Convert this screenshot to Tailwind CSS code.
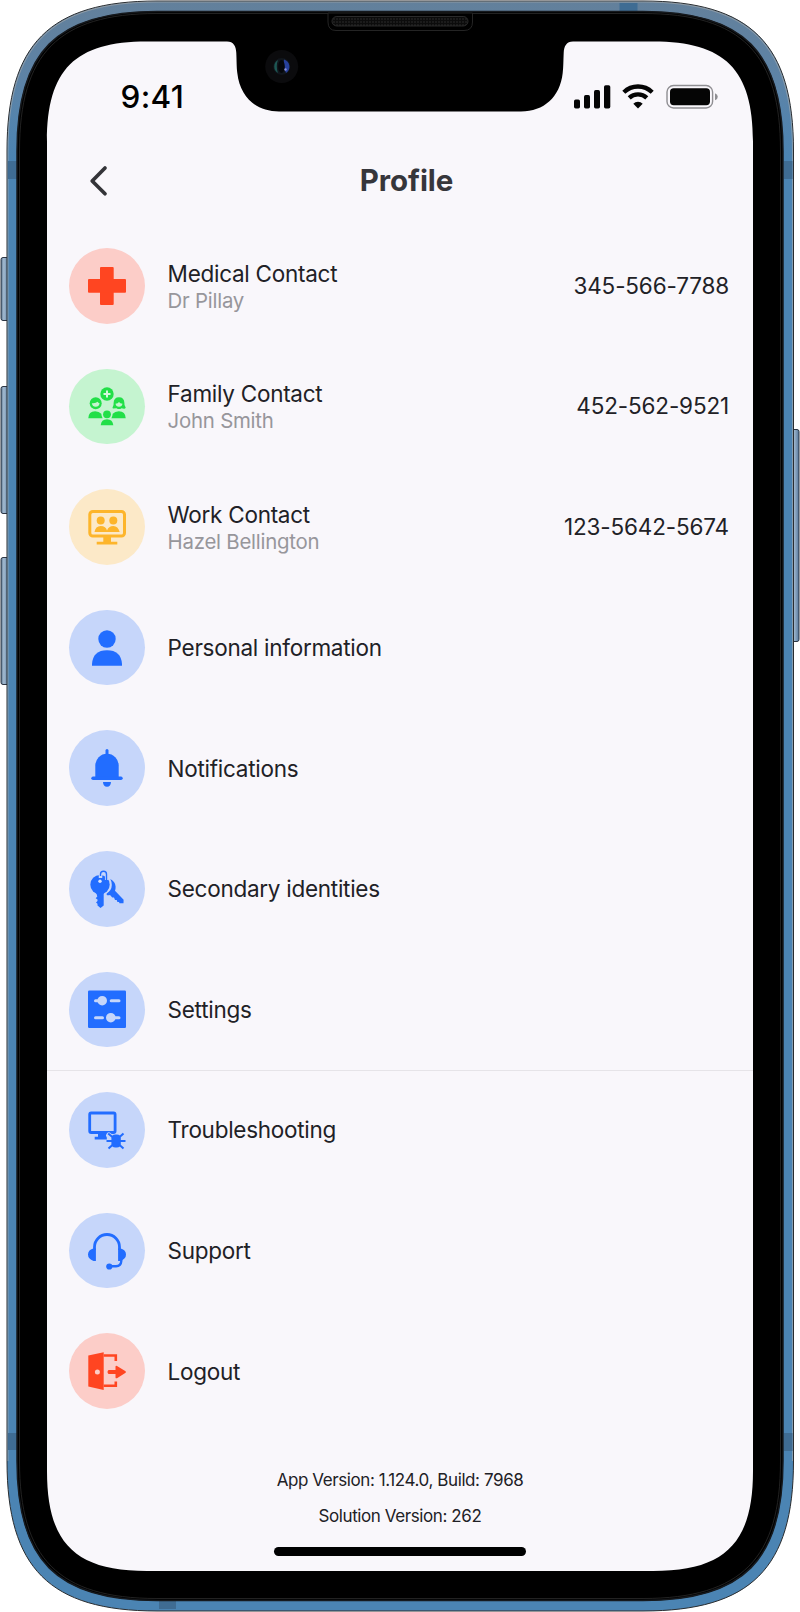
<!DOCTYPE html>
<html lang="en">
<head>
<meta charset="utf-8">
<title>Profile</title>
<script src="https://cdn.jsdelivr.net/npm/@tailwindcss/browser@4"></script>
</head>
<body class="bg-white">
<div class="relative w-[800px] h-[1612px] overflow-hidden font-['Inter','Liberation_Sans',sans-serif] text-[#212126]">
  <!-- device frame -->
  <svg class="absolute inset-0" width="800" height="1612" viewBox="0 0 800 1612" fill="none">
    <defs>
      <linearGradient id="body" x1="0" y1="0" x2="0" y2="1612" gradientUnits="userSpaceOnUse">
        <stop offset="0" stop-color="#63809b"/><stop offset=".05" stop-color="#5d83a6"/><stop offset=".1" stop-color="#4b84b3"/><stop offset="1" stop-color="#4b84b3"/>
      </linearGradient>
      <linearGradient id="btn" x1="0" y1="0" x2="1" y2="0">
        <stop offset="0" stop-color="#5c7690"/><stop offset=".35" stop-color="#a3bbd1"/><stop offset="1" stop-color="#55779b"/>
      </linearGradient>
      <pattern id="mesh" width="3" height="3" patternUnits="userSpaceOnUse"><rect width="3" height="3" fill="#0c0c0c"/><circle cx="1" cy="1" r=".8" fill="#2e2e2e"/></pattern>
    </defs>
    <g fill="url(#btn)" stroke="#2b3543" stroke-width="1">
      <rect x="1" y="257.500" width="8" height="63" rx="2"/>
      <rect x="1" y="386.500" width="8" height="127" rx="2"/>
      <rect x="1" y="557.500" width="8" height="127" rx="2"/>
      <rect x="791" y="429.500" width="8" height="212" rx="2"/>
    </g>
    <path d="M7 151C7 44 49.500 1 157 1H643C751 1 793.500 44 793.500 151V1461C793.500 1568 751 1611 643 1611H157C49.500 1611 7 1568 7 1461Z" fill="url(#body)" stroke="#2a2d30" stroke-width="1"/>
    <path d="M8 1461V151C8 45 50.500 2 157 2H643C750 2 792.500 45 792.500 151V1461" stroke="#b9b5ae" stroke-opacity=".75" stroke-width=".7"/>
    <g fill="#3f6c93">
      <rect x="8" y="161" width="9" height="18"/><rect x="784" y="161" width="8.500" height="18"/>
      <rect x="8" y="1433" width="9" height="17"/><rect x="784" y="1433" width="8.500" height="18"/>
      <rect x="619.500" y="3" width="18" height="8"/><rect x="159" y="1601" width="17" height="8"/>
    </g>
    <path d="M17 151C17 52 56 11.500 157 11.500H643C744 11.500 783 52 783 151V1461C783 1560 744 1600.500 643 1600.500H157C56 1600.500 17 1560 17 1461Z" fill="#000" stroke="#16191d" stroke-width="1.500"/>
    <path d="M19.500 151C19.500 54 58 13.500 157 13.500H643C742 13.500 780.500 54 780.500 151V1461C780.500 1558 742 1598.500 643 1598.500H157C58 1598.500 19.500 1558 19.500 1461Z" stroke="#222"/>
    <path d="M328 13V22Q328 30.500 336 30.500H464Q472.500 30.500 472.500 22V13Z" fill="#000" stroke="#242424" stroke-width="1"/>
    <rect x="332" y="16.500" width="136" height="9.500" rx="4.700" fill="url(#mesh)" stroke="#333" stroke-width=".8"/>
    <!-- screen with notch -->
    <path d="M47 141.500C47 69.500 75 41.500 147 41.500H227C233.500 41.500 236 46 236.300 53C236.700 62 236.500 66 237.300 73C240 97 256 111.500 279 111.500H521C544 111.500 560 97 562.700 73C563.500 66 563.300 62 563.700 53C564 46 566.500 41.500 573 41.500H653C725 41.500 753 69.500 753 141.500V1471C753 1543 725 1571 653 1571H147C75 1571 47 1543 47 1471Z" fill="#f9f7fb"/>
    <circle cx="281.700" cy="66.500" r="16.500" fill="#0b0b0d"/>
    <circle cx="281.700" cy="66.500" r="8.500" fill="#11161c"/>
    <path d="M278 60A7.500 7.500 0 0 0 278 73Q275.500 66 278 60Z" fill="#1d5753"/>
    <path d="M284 59.500A7.500 7.500 0 0 1 286 73Q283 66 284 59.500Z" fill="#27409b"/>
    <ellipse cx="281.500" cy="66.500" rx="3.300" ry="6.500" fill="#05070b"/>
    <circle cx="285.500" cy="69.500" r="1.200" fill="#8a8fd8"/>
  </svg>

  <main class="relative ml-[47px] w-[706px] h-full flex flex-col">
    <!-- status bar -->
    <div class="mt-[72px] h-[50px] flex items-center justify-between pl-[73.500px] pr-[34px]">
      <span class="pb-px text-[31.500px] font-medium leading-none tracking-[0.3px] text-black">9:41</span>
      <svg width="146" height="26" viewBox="0 0 146 26" fill="none">
        <g fill="#050505"><rect x="1" y="15.500" width="6" height="9" rx="1.700"/><rect x="11" y="11" width="6" height="13.500" rx="1.700"/><rect x="21" y="6" width="6" height="18.500" rx="1.700"/><rect x="31" y="1.200" width="6.300" height="23.300" rx="1.700"/></g>
        <g stroke="#050505" stroke-width="4.300"><path d="M50.800 8.200A20.500 20.500 0 0 1 79.200 8.200"/><path d="M56.200 13.900A12.700 12.700 0 0 1 73.800 13.900"/></g>
        <path d="M65 24.600L60.300 19.800A6.700 6.700 0 0 1 69.700 19.800Z" fill="#050505"/>
        <rect x="94" y="1.500" width="45.600" height="22.500" rx="6.500" stroke="#8f8e92" stroke-width="1.400"/>
        <rect x="97" y="4.300" width="40" height="17" rx="3.700" fill="#050505"/>
        <path d="M142 9.300Q144.800 10.300 144.800 12.800T142 16.300Z" fill="#8f8e92"/>
      </svg>
    </div>
    <!-- header -->
    <header class="relative mt-[32px] h-[52px] flex items-center justify-center pl-[13px]">
      <svg class="absolute left-[42px] top-[10.500px]" width="20" height="32" viewBox="0 0 20 32" fill="none" stroke="#343438" stroke-width="3.700" stroke-linecap="round" stroke-linejoin="round"><path d="M16 3L3.200 16L16 28.700"/></svg>
      <h1 class="pt-[1.500px] text-[29.500px] font-bold leading-none tracking-[-0.1px] text-[#36363b]">Profile</h1>
    </header>

    <!-- rows -->
    <section class="mt-[19.500px] pl-[22.400px] pr-[24px] text-[22.500px] tracking-[-0.270px] leading-[27px] [&>div]:h-[120.600px] [&>div]:flex [&>div]:items-center [&>div>i]:size-[75.600px] [&>div>i]:rounded-full [&>div>i]:flex [&>div>i]:items-center [&>div>i]:justify-center [&>div>i]:mr-[22.600px] [&>div>i]:shrink-0 [&_svg]:size-[38px] [&_svg]:overflow-visible [&_b]:font-normal [&_b]:tracking-[-0.150px] [&_b]:-mt-px [&_p]:pt-[1.500px] [&_small]:block [&_small]:text-[20.400px] [&_small]:tracking-[-0.230px] [&_small]:leading-[27px] [&_small]:text-[#97969b]">
      <div>
        <i class="bg-[#fccdc8]"><svg viewBox="0 0 38 38" fill="#ff4521"><rect x="12" width="13.700" height="38" rx="1"/><rect y="12" width="38" height="13.700" rx="1"/></svg></i>
        <p class="grow">Medical Contact<small>Dr Pillay</small></p><b>345-566-7788</b>
      </div>
      <div>
        <i class="bg-[#c5f4d0]"><svg viewBox="0 0 38 38" fill="#22df48"><circle cx="19" cy="7" r="6.700"/><path d="M19 3.500V10.500M15.500 7H22.500" stroke="#d6f7de" stroke-width="2"/><circle cx="7.700" cy="16.300" r="6"/><path d="M3.800 16.200Q8 16.600 9.500 14.800Q10.300 16 11.600 16.300Q11 19.800 7.700 19.800Q4.500 19.800 3.800 16.200Z" fill="#c5f4d0"/><path d="M25 21.500Q24.700 21.500 24.500 20.500Q26 18.500 25.600 16Q25.800 10.300 31 10.300T36.400 16Q36 18.500 37.700 20.500Q37.300 21.800 36 21.700L33.500 21.200Q31 23 28.500 21.200Z"/><path d="M27.500 16.800Q30 16.500 31 15Q32 16.500 34.500 16.800Q34 19.800 31 19.800T27.500 16.800Z" fill="#c5f4d0"/><path d="M.3 31.300Q.5 24.300 7.200 24.300Q11 24.300 13.300 26.800Q13.400 29 14.600 31.300ZM37.700 31.300Q37.500 24.300 30.800 24.300Q27 24.300 24.700 26.800Q24.600 29 23.400 31.300Z"/><circle cx="19" cy="27.300" r="3.900"/><path d="M12.700 38.300Q13.200 32.300 19 32.300T25.300 38.300Z"/></svg></i>
        <p class="grow">Family Contact<small>John Smith</small></p><b>452-562-9521</b>
      </div>
      <div>
        <i class="bg-[#fce9c8]"><svg viewBox="0 0 38 38" fill="#fdb52b"><rect x="1.800" y="3.500" width="34.700" height="24.500" rx="3" fill="none" stroke="#fdb52b" stroke-width="3"/><circle cx="12.700" cy="12.500" r="4"/><circle cx="25.300" cy="12.500" r="4"/><path d="M6.500 24Q7.500 18 12.700 18T19 22.500Q20.500 18 25.300 18T31.700 24Z"/><path d="M15.300 29H23V33.700H29.300V36.400H8.700V33.700H15.300Z"/></svg></i>
        <p class="grow">Work Contact<small>Hazel Bellington</small></p><b>123-5642-5674</b>
      </div>
      <div>
        <i class="bg-[#c6d6fa]"><svg viewBox="0 0 38 38" fill="#226dff"><circle cx="19" cy="10" r="8.700"/><path d="M4 36.700V35Q5 21.300 19 21.300T34 35V36.700Z"/></svg></i>
        <span>Personal information</span>
      </div>
      <div>
        <i class="bg-[#c6d6fa]"><svg viewBox="0 0 38 38" fill="#226dff"><rect x="17.500" y="0" width="3" height="8" rx="1.500"/><path d="M7.300 28V16.500A11.700 11.700 0 0 1 30.700 16.500V28Z"/><rect x="3.300" y="27.500" width="31.400" height="3.500" rx="1.700"/><path d="M15 33H23Q22.800 37.700 19 37.700T15 33Z"/></svg></i>
        <span>Notifications</span>
      </div>
      <div>
        <i class="bg-[#c6d6fa]"><svg viewBox="0 0 38 38" fill="#226dff"><path d="M22.300 9Q27.300 11.500 27.600 16.500Q27.700 18.800 27 20.700L35.600 29.800L35.500 33.300L31.500 33.200L31 31.900L29.400 32L28.700 29.900L27 30L26 27.500L24.300 27.500L22 24.900Q20.500 25.400 18.700 25V23.500Q23.700 20.500 23.800 15Q23.800 11.700 22.300 9Z"/><circle cx="12" cy="14.700" r="9.700"/><path d="M8 22H15.700V35.500L12.500 38L9.500 35.500V33.800L8 32.500L9.500 31V29.500L7.700 28.200L9.300 26.500Z"/><path d="M12.500 8V4.500A3 3 0 0 1 18.700 4.500V10" fill="none" stroke="#c6d6fa" stroke-width="3.500"/><path d="M12.500 6V4.300A3 3 0 0 1 18.500 4.300V10Q18.500 11.500 17 11.500" fill="none" stroke="#226dff" stroke-width="1.400"/><circle cx="12" cy="11.300" r="1.700" fill="#d5e2ff"/></svg></i>
        <span>Secondary identities</span>
      </div>
      <div>
        <i class="bg-[#c6d6fa]"><svg viewBox="0 0 38 38"><rect y=".4" width="38" height="37.600" rx="1.300" fill="#226dff"/><g stroke="#c6d6fa" stroke-width="3" stroke-linecap="round" fill="#c6d6fa"><path d="M7.500 10.700H12M23.200 10.700H31M7.500 27.700H14.500M24 27.700H31"/><circle cx="14.200" cy="10.700" r="3.300"/><circle cx="22.800" cy="27.700" r="3.300"/></g></svg></i>
        <span>Settings</span>
      </div>
      <hr class="border-0 h-px -ml-[22.400px] -mr-[24px] -mb-px bg-[#e6e4e8]">
      <div>
        <i class="bg-[#c6d6fa]"><svg viewBox="0 0 38 38" fill="#226dff"><path d="M10 22H18V25.500H21V28.500H6.700V25.700H10Z"/><rect x="1.700" y="2" width="25.400" height="19.500" rx="1.500" fill="none" stroke="#226dff" stroke-width="2.800"/><path d="M10 22H20" stroke="#226dff" stroke-width="3"/><path d="M18.500 23Q20 20 23 22.500L25 24Q28 21.500 31 24L33 36H22L19 30Z" fill="#c6d6fa"/><rect x="23.400" y="23.500" width="9.400" height="13" rx="4"/><path d="M20.200 22.500L25 26.500M35.500 22.500L31 26.500M18.500 30H37.500M20.500 37.500L25 33.500M35.500 37.500L31 33.500" fill="none" stroke="#226dff" stroke-width="2"/></svg></i>
        <span>Troubleshooting</span>
      </div>
      <div>
        <i class="bg-[#c6d6fa]"><svg viewBox="0 0 38 38" fill="#226dff"><path d="M6.500 18V15A12.500 12.500 0 0 1 31.500 15V18" fill="none" stroke="#226dff" stroke-width="2.800"/><path d="M5.200 16.500H7.900V28.900H5.500Q0 27 0 22.500T5.200 16.500ZM32.800 16.500H30.100V28.900H32.500Q38 27 38 22.500T32.800 16.500Z"/><path d="M33.300 27.500V29Q33 34 28 34.300H22" fill="none" stroke="#226dff" stroke-width="2.400"/><circle cx="21.300" cy="34.500" r="3.100"/></svg></i>
        <span>Support</span>
      </div>
      <div>
        <i class="bg-[#fccdc8]"><svg viewBox="0 0 38 38" fill="#ff4521"><path d="M.3 3.600L15.700.3V38L.3 34.600Z"/><path d="M15.700 3.500H27.800V9M15.700 33.700H27.800V29.500" fill="none" stroke="#ff4521" stroke-width="2.600"/><circle cx="9.400" cy="20" r="2.500" fill="#fccdc8"/><path d="M20.500 18H27.500V14.500Q27.800 13.200 29 14L37.600 19.300Q38.200 20 37.600 20.700L29 26.200Q27.800 26.700 27.500 25.500V22H20.500Q18.500 20 20.500 18Z"/></svg></i>
        <span>Logout</span>
      </div>
    </section>

    <footer class="mt-[32px] flex flex-col items-center text-[17px] tracking-[-0.410px] leading-[35.600px]">
      <span>App Version: 1.124.0, Build: 7968</span>
      <span>Solution Version: 262</span>
      <div class="mt-[12px] w-[252px] h-[9px] rounded-full bg-black"></div>
    </footer>
  </main>
</div>
</body>
</html>
